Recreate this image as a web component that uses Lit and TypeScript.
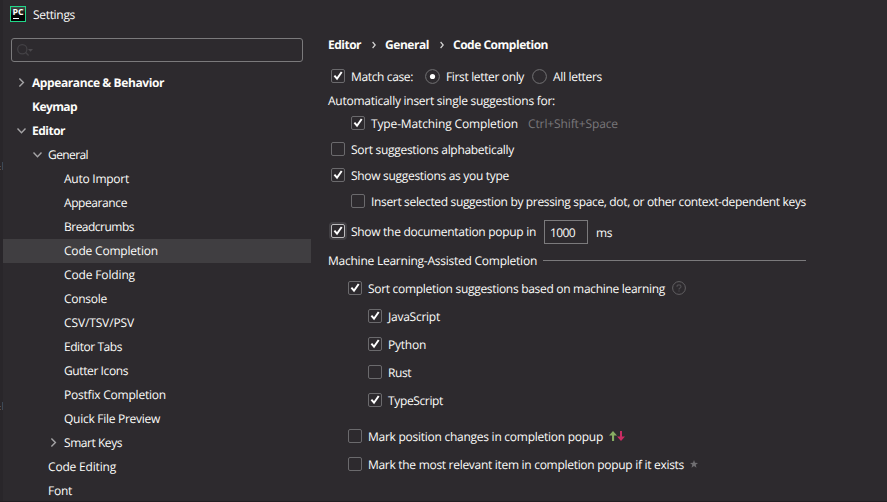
import { LitElement, html, css, svg, nothing } from "lit";
import { customElement, property } from "lit/decorators.js";
import { classMap } from "lit/directives/class-map.js";

/** A single-line label whose tracking is adjusted to fill a given width. */
@customElement("fit-text")
class FitText extends LitElement {
  static styles = css`
    :host { display: block; flex: none; white-space: pre; }
    span { display: inline-block; text-rendering: geometricPrecision; }
  `;
  @property() text = "";
  @property({ type: Number }) w = 0;

  render() {
    return html`<span>${this.text}</span>`;
  }

  updated() {
    const span = this.renderRoot.querySelector("span") as HTMLElement;
    this.style.width = `${this.w}px`;
    span.style.letterSpacing = "0px";
    const natural = span.getBoundingClientRect().width;
    span.style.letterSpacing = `${(this.w - natural) / this.text.length}px`;
  }
}

@customElement("check-box")
class CheckBox extends LitElement {
  static styles = css`
    :host { display: block; flex: none; width: 14px; height: 14px; }
    .box {
      box-sizing: border-box; width: 14px; height: 14px;
      border: 1px solid #6b6a6d; border-radius: 2px;
    }
    .focused { border-color: #bdbcbe; box-shadow: 0 0 0 2px #413f43; }
    svg { display: block; width: 12px; height: 12px; }
  `;
  @property({ type: Boolean }) checked = false;
  @property({ type: Boolean }) focused = false;

  render() {
    return html`<div class=${classMap({ box: true, focused: this.focused })}>
      ${this.checked
        ? html`<svg viewBox="0 0 12 12"><path d="M2.4 5.7 L5 8.7 L9.7 2" fill="none" stroke="#fff" stroke-width="2"/></svg>`
        : nothing}
    </div>`;
  }
}

interface Node {
  text: string;
  w: number;
  level: number;
  state?: "open" | "closed";
  selected?: boolean;
}

const TREE: Node[] = [
  { text: "Appearance & Behavior", w: 132, level: 0, state: "closed" },
  { text: "Keymap", w: 45, level: 0 },
  { text: "Editor", w: 33, level: 0, state: "open" },
  { text: "General", w: 40, level: 1, state: "open" },
  { text: "Auto Import", w: 65, level: 2 },
  { text: "Appearance", w: 63, level: 2 },
  { text: "Breadcrumbs", w: 70, level: 2 },
  { text: "Code Completion", w: 94, level: 2, selected: true },
  { text: "Code Folding", w: 71, level: 2 },
  { text: "Console", w: 43, level: 2 },
  { text: "CSV/TSV/PSV", w: 70, level: 2 },
  { text: "Editor Tabs", w: 58, level: 2 },
  { text: "Gutter Icons", w: 64, level: 2 },
  { text: "Postfix Completion", w: 102, level: 2 },
  { text: "Quick File Preview", w: 96, level: 2 },
  { text: "Smart Keys", w: 58, level: 2, state: "closed" },
  { text: "Code Editing", w: 68, level: 1 },
  { text: "Font", w: 24, level: 1 },
];

const LANGUAGES = [
  { text: "JavaScript", w: 52, on: true },
  { text: "Python", w: 38, on: true },
  { text: "Rust", w: 23, on: false },
  { text: "TypeScript", w: 55, on: true },
];

const label = (text: string, w: number, cls = "") =>
  html`<fit-text class=${cls} .text=${text} .w=${w}></fit-text>`;

@customElement("app-root")
class AppRoot extends LitElement {
  static styles = css`
    :host {
      display: block; box-sizing: border-box; width: 887px; height: 502px; overflow: hidden;
      background: #2d2a2e; color: #fcfcfa;
      font: 12px/20px "Open Sans", "Noto Sans", sans-serif;
    }
    svg { display: block; flex: none; }
    .window {
      display: grid; grid-template-columns: 3px 308px 1fr; height: 502px;
      box-sizing: border-box; border-bottom: 1px solid #231f23; overflow: hidden;
    }
    .behind {
      display: flex; flex-direction: column; gap: 231px; padding-top: 162px;
      box-sizing: border-box; background: #29262a; overflow: hidden;
    }
    .title { display: flex; align-items: center; gap: 7px; height: 20px; margin: 5px 0 0 7px; font-size: 12px; }
    .title svg { margin-top: -2px; }
    .search {
      box-sizing: border-box; width: 292px; height: 24px; margin: 13px 0 9px 8px;
      border: 1px solid #7b7a7c; border-radius: 3px; padding: 4px 0 0 4px;
    }
    .node { display: flex; align-items: center; height: 24px; }
    .l0 { padding-left: 13px; font-weight: 700; }
    .l1 { padding-left: 29px; }
    .l2 { padding-left: 45px; }
    .selected { background: #403e41; }
    .arrow { width: 16px; flex: none; }
    .main { padding: 35px 0 0 17px; }
    .row { display: flex; align-items: center; height: 20px; }
    .row check-box { margin-right: 6px; }
    .row fit-text { margin-top: 1px; }
    .row.plain fit-text { margin-top: -1px; }
    .crumbs { font-weight: 700; }
    .crumbs svg { margin: 0 9px 0 11px; }
    .i0 { padding-left: 3px; }
    .i1 { padding-left: 23px; }
    .i2 { padding-left: 20px; }
    .i3 { padding-left: 40px; }
    .m2 { margin-top: 2px; }
    .m5 { margin-top: 5px; }
    .m6 { margin-top: 6px; }
    .m7 { margin-top: 7px; }
    .m8 { margin-top: 8px; }
    .m11 { margin-top: 11px; }
    .m16 { margin-top: 16px; }
    .radio { margin: 1px 6px 0 12px; }
    .radio.second { margin-left: 8px; }
    .hint { color: #79777a; margin-left: 10px; }
    .delay { height: 24px; margin-top: 9px; }
    .delay check-box { margin-top: -2px; }
    .delay > fit-text { margin-top: 0; }
    .delay > .unit { margin-top: 2px; }
    .field {
      box-sizing: border-box; width: 44px; height: 24px; margin: 0 8px;
      border: 1px solid #7b7a7c; padding: 2px 0 0 5px; line-height: 20px;
    }
    .row .field fit-text { margin-top: 0; }
    .rule { width: 263px; height: 1px; background: #7b7a7c; margin: -1px 0 0 6px; }
    .help { margin-left: 7px; }
    .moves { margin-left: 6px; }
    .star { margin-left: 6px; margin-top: -1px; }
  `;

  private node(n: Node) {
    return html`<div class=${classMap({ node: true, [`l${n.level}`]: true, selected: !!n.selected })}>
      <svg class="arrow" width="16" height="12" viewBox="0 0 16 12" fill="none" stroke="#a5a4a6" stroke-width="1.4">
        ${n.state === "open" ? svg`<path d="M1.5 3.5 L5.5 7.7 L9.5 3.5"/>` : nothing}
        ${n.state === "closed" ? svg`<path d="M3.4 1.5 L7.4 5.5 L3.4 9.5"/>` : nothing}
      </svg>${label(n.text, n.w)}
    </div>`;
  }

  private check(cls: string, text: string, w: number, on: boolean, extra: unknown = nothing) {
    return html`<div class="row ${cls}"><check-box ?checked=${on}></check-box>${label(text, w)}${extra}</div>`;
  }

  private radio(cls: string, on: boolean) {
    return html`<svg class="radio ${cls}" width="15" height="15" viewBox="0 0 15 15">
      <circle cx="7.5" cy="7.5" r="6.9" fill="none" stroke="#727173"/>
      ${on ? svg`<circle cx="7.5" cy="7.5" r="2.6" fill="#fff"/>` : nothing}
    </svg>`;
  }

  render() {
    const crumb = html`<svg width="4" height="8" viewBox="0 0 4 8"><path d="M.6 1 L3.2 4 L.6 7" fill="none" stroke="#d5d5d4" stroke-width="1.2"/></svg>`;
    const sliver = html`<svg width="3" height="9" viewBox="0 0 3 9">
      <path d="M0 4.5 H1 M0 7.5 H1" stroke="#5c4a40"/><path d="M2.5 0 V8" stroke="#3c4754"/>
    </svg>`;
    return html`<div class="window">
      <div class="behind">${sliver}${sliver}</div>
      <div>
        <div class="title">
          <svg width="16" height="16" viewBox="0 0 16 16">
            <defs><linearGradient id="g" x2="0" y2="1"><stop offset="0" stop-color="#4a4e4c"/><stop offset=".6" stop-color="#050505"/></linearGradient></defs>
            <rect x=".5" y=".5" width="15" height="15" fill="url(#g)" stroke="#21d789"/>
            <text x="2.4" y="8.8" font-family="Open Sans" font-size="8" font-weight="700" textLength="11.2" lengthAdjust="spacingAndGlyphs" fill="#fff">PC</text>
            <rect x="3" y="12" width="6" height="1" fill="#fff"/>
          </svg>
          ${label("Settings", 42)}
        </div>
        <div class="search">
          <svg width="18" height="14" viewBox="0 0 18 14">
            <circle cx="6.3" cy="6.2" r="4.6" fill="none" stroke="#444246" stroke-width="1.2"/>
            <path d="M9.6 9.5 L12.6 12.5" stroke="#444246" stroke-width="1.4"/>
            <path d="M12 6 h5 l-2.5 2.8 z" fill="#4b494d"/>
          </svg>
        </div>
        ${TREE.map((n) => this.node(n))}
      </div>
      <div class="main">
        <div class="row plain crumbs">${label("Editor", 33)}${crumb}${label("General", 44)}${crumb}${label("Code Completion", 95)}</div>
        <div class="row i0 m11">
          <check-box checked></check-box>${label("Match case:", 62)}
          ${this.radio("", true)}${label("First letter only", 78)}
          ${this.radio("second", false)}${label("All letters", 49)}
        </div>
        <div class="row plain m5">${label("Automatically insert single suggestions for:", 227)}</div>
        ${this.check("i1 m2", "Type-Matching Completion", 147, true, label("Ctrl+Shift+Space", 90, "hint"))}
        ${this.check("i0 m6", "Sort suggestions alphabetically", 163, false)}
        ${this.check("i0 m6", "Show suggestions as you type", 158, true)}
        ${this.check("i1 m6", "Insert selected suggestion by pressing space, dot, or other context-dependent keys", 435, false)}
        <div class="row i0 delay">
          <check-box checked focused></check-box>${label("Show the documentation popup in", 185)}
          <div class="field">${label("1000", 25)}</div>
          ${label("ms", 16, "unit")}
        </div>
        <div class="row plain m7">${label("Machine Learning-Assisted Completion", 209)}<div class="rule"></div></div>
        ${this.check("i2 m7", "Sort completion suggestions based on machine learning", 297, true,
          html`<svg class="help" width="14" height="14" viewBox="0 0 14 14" fill="none" stroke="#626063">
            <circle cx="7" cy="7" r="6.4"/>
            <path d="M5 5.7 Q5 3.9 7 3.9 Q9 3.9 9 5.5 Q9 6.4 8 7 Q7 7.5 7 8.5 M7 9.4 V10.6" stroke="#504e52" stroke-width="1.2"/>
          </svg>`)}
        ${LANGUAGES.map((l) => this.check("i3 m8", l.text, l.w, l.on))}
        ${this.check("i2 m16", "Mark position changes in completion popup", 235, false,
          html`<svg class="moves" width="16" height="10" viewBox="0 0 16 10">
            <path d="M4 0 L8 4.4 H5.1 V10 H3 V4.4 H0 Z" fill="#87ad62"/>
            <path d="M12 10 L16 5.6 H13 V0 H11 V5.6 H8 Z" fill="#c92c63"/>
          </svg>`)}
        ${this.check("i2 m8", "Mark the most relevant item in completion popup if it exists", 316, false,
          html`<svg class="star" width="8" height="8" viewBox="0 0 8 8"><path d="M4 0 L5 2.8 L8 2.9 L5.7 4.8 L6.5 7.8 L4 6.1 L1.5 7.8 L2.3 4.8 L0 2.9 L3 2.8 Z" fill="#706f72"/></svg>`)}
      </div>
    </div>`;
  }
}
